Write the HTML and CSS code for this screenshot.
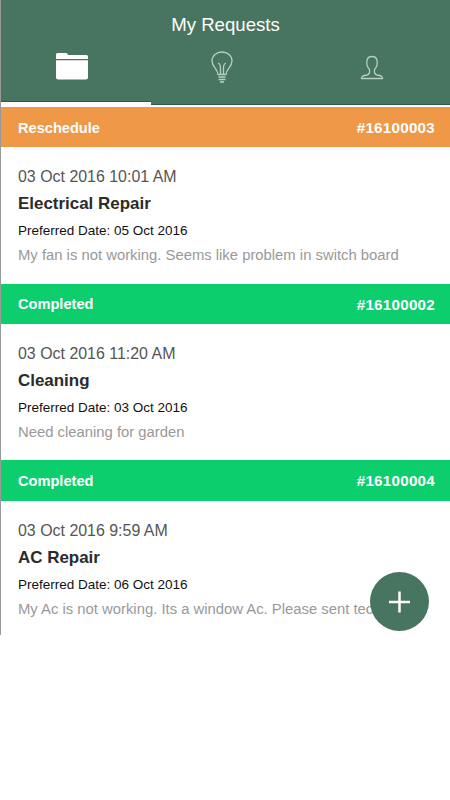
FILE: index.html
```
<!DOCTYPE html>
<html lang="en">

<head>
    <meta charset="UTF-8">
    <meta name="viewport" content="width=device-width, initial-scale=1.0">
    <title>My Requests</title>
    <link rel="stylesheet" href="styles.css">
</head>

<body>
    <div class="app">
        <header class="header">
            <h1>My Requests</h1>
            <nav class="tabs">
                <a class="tab active">
                    <svg width="34" height="30" viewBox="0 0 34 30">
                        <path d="M1 7V3.500Q1 2 2.500 2H11Q12.500 2 13 4H31.500Q33 4 33 5.500V8H1Z" fill="#fff" />
                        <path d="M1 9.300H33V26.500Q33 28.500 31 28.500H3Q1 28.500 1 26.500Z" fill="#fff" />
                    </svg>
                </a>
                <a class="tab">
                    <svg class="line-icon" width="24" height="34" viewBox="0 0 24 34">
                        <path d="M8 24.500C8 19 2 17 2 11C2 5.500 6.500 2 12 2S22 5.500 22 11C22 17 16 19 16 24.500Z" />
                        <path d="M10.500 24.500V18Q10.500 14 8 13M13.500 24.500V18Q13.500 14 16 13M8.500 27H15.500M8.500 29.500H15.500M10 32H14" />
                    </svg>
                </a>
                <a class="tab">
                    <svg class="line-icon" width="24" height="26" viewBox="0 0 24 26">
                        <path d="M9.500 15.500C5.500 11 5.500 2.500 12 2.500S18.500 11 14.500 15.500C14 19 14.500 20.500 17 21C21 21.700 22.500 22 22.500 24.500H1.500C1.500 22 3 21.700 7 21C9.500 20.500 10 19 9.500 15.500Z" />
                    </svg>
                </a>
            </nav>
        </header>

        <main class="requests">
            <section class="request">
                <div class="status reschedule">
                    <span>Reschedule</span>
                    <span class="number">#16100003</span>
                </div>
                <div class="details">
                    <p class="created">03 Oct 2016 10:01 AM</p>
                    <h2>Electrical Repair</h2>
                    <p class="preferred">Preferred Date: 05 Oct 2016</p>
                    <p class="description">My fan is not working. Seems like problem in switch board</p>
                </div>
            </section>

            <section class="request">
                <div class="status completed">
                    <span>Completed</span>
                    <span class="number">#16100002</span>
                </div>
                <div class="details">
                    <p class="created">03 Oct 2016 11:20 AM</p>
                    <h2>Cleaning</h2>
                    <p class="preferred">Preferred Date: 03 Oct 2016</p>
                    <p class="description">Need cleaning for garden</p>
                </div>
            </section>

            <section class="request">
                <div class="status completed">
                    <span>Completed</span>
                    <span class="number">#16100004</span>
                </div>
                <div class="details">
                    <p class="created">03 Oct 2016 9:59 AM</p>
                    <h2>AC Repair</h2>
                    <p class="preferred">Preferred Date: 06 Oct 2016</p>
                    <p class="description">My Ac is not working. Its a window Ac. Please sent tech</p>
                </div>
            </section>
        </main>

        <button class="add-button" aria-label="Add request">
            <svg width="22" height="22" viewBox="0 0 22 22">
                <path d="M10.500 0.500V21.500M0 11H21" stroke="#fff" stroke-width="2.500" />
            </svg>
        </button>
    </div>
</body>

</html>
```

FILE: styles.css
```
body {
    margin: 0;
    background-color: #fff;
    font-family: "Liberation Sans", Arial, sans-serif;
}

h1, h2, p {
    margin: 0;
    font-weight: normal;
}

.app {
    position: relative;
    box-sizing: border-box;
    height: 635px;
    border-left: 1px solid #999;
}

.header {
    display: flex;
    flex-direction: column;
    height: 105px;
    background-color: #48755f;
}

.header h1 {
    padding-top: 13px;
    color: #fff;
    font-size: 18.6px;
    line-height: 24px;
    text-align: center;
}

.tabs {
    display: flex;
    flex: 1;
}

.tab {
    display: flex;
    flex: 1;
    justify-content: center;
    padding-top: 14px;
    box-sizing: border-box;
    border-bottom: 1px solid #2f5c49;
}

.tab.active {
    border-bottom: 3px solid #fff;
    padding-right: 8px;
    box-shadow: inset 0 -1px #2f5c49;
}

.tab:nth-child(2) {
    padding-right: 8px;
    padding-top: 13px;
}

.tab:nth-child(3) {
    padding-top: 17px;
    padding-right: 7px;
}

.line-icon {
    fill: none;
    stroke: #b5d2c1;
    stroke-width: 1.3;
}

.requests {
    padding-top: 2px;
}

.request {
    height: 176.6px;
}

.status {
    display: flex;
    justify-content: space-between;
    align-items: center;
    box-sizing: border-box;
    height: 40.4px;
    padding: 1px 15px 0 17px;
    color: #fff;
    font-size: 14.6px;
    font-weight: bold;
}

.reschedule {
    background-color: #ee9848;
}

.completed {
    background-color: #0dce6d;
}

.number {
    font-size: 15.2px;
    letter-spacing: 0.25px;
}

.details {
    padding: 17px 0 0 17px;
    white-space: nowrap;
}

.created {
    color: #555;
    font-size: 15.95px;
    line-height: 25px;
}

.details h2 {
    color: #2b2b2b;
    font-size: 16.95px;
    font-weight: bold;
    line-height: 29px;
}

.preferred {
    color: #111;
    font-size: 13.5px;
    line-height: 25px;
}

.description {
    color: #999;
    font-size: 14.83px;
    line-height: 25px;
}

/* floating button over the list */
.add-button {
    position: absolute;
    right: 21px;
    bottom: 4px;
    display: flex;
    align-items: center;
    justify-content: center;
    width: 59px;
    height: 59px;
    padding: 0;
    border: none;
    border-radius: 50%;
    background-color: #48755f;
}
```
